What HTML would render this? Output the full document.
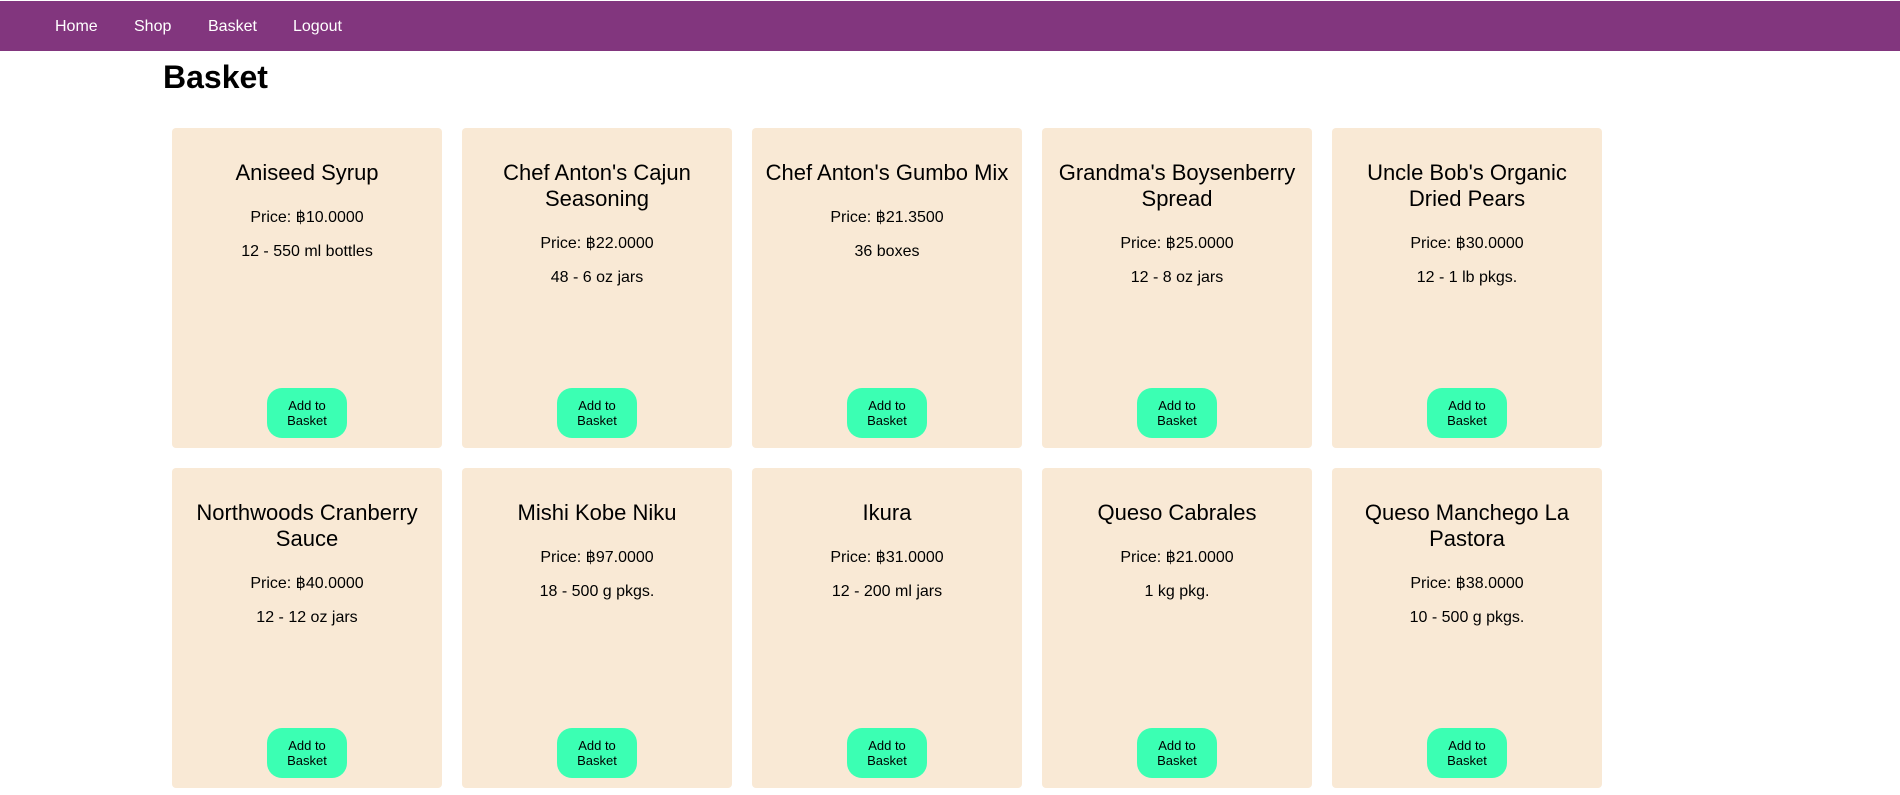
<!DOCTYPE html>
<html><head><meta charset="utf-8"><style>
*{box-sizing:border-box}
body{margin:0;width:1900px;height:795px;overflow:hidden;background:#fff;font-family:"Liberation Sans",Arial,sans-serif;color:#000}
.nav{position:absolute;top:1px;left:0;width:1900px;height:50px;background:#82367e}
.nav a{position:absolute;top:16px;color:#fff;font-size:16px;line-height:19px;text-decoration:none}
h1{position:absolute;left:163px;top:59px;margin:0;font-size:32px;line-height:37px;font-weight:bold}
.card{position:absolute;width:270px;height:320px;background:#f9e9d5;border-radius:4px;text-align:center;padding:32px 8px 0}
.card h3{margin:0;font-size:22px;line-height:26px;font-weight:normal}
.card .p{margin:22px 0 0;font-size:16px;line-height:19px}
.card .d{margin:15px 0 0;font-size:16px;line-height:19px}
.card button{position:absolute;left:95px;top:260px;width:80px;height:50px;border:0;border-radius:15px;background:#3bffb3;font-family:"Liberation Sans",Arial,sans-serif;font-size:13px;line-height:15px;color:#000;padding:0 10px}
</style></head><body>
<div class="nav"><a style="left:55px">Home</a><a style="left:134px">Shop</a><a style="left:208px">Basket</a><a style="left:293px">Logout</a></div>
<h1>Basket</h1>
<div class="card" style="left:172px;top:128px"><h3>Aniseed Syrup</h3><p class="p">Price: ฿10.0000</p><p class="d">12 - 550 ml bottles</p><button>Add to Basket</button></div>
<div class="card" style="left:462px;top:128px"><h3>Chef Anton's Cajun Seasoning</h3><p class="p">Price: ฿22.0000</p><p class="d">48 - 6 oz jars</p><button>Add to Basket</button></div>
<div class="card" style="left:752px;top:128px"><h3>Chef Anton's Gumbo Mix</h3><p class="p">Price: ฿21.3500</p><p class="d">36 boxes</p><button>Add to Basket</button></div>
<div class="card" style="left:1042px;top:128px"><h3>Grandma's Boysenberry Spread</h3><p class="p">Price: ฿25.0000</p><p class="d">12 - 8 oz jars</p><button>Add to Basket</button></div>
<div class="card" style="left:1332px;top:128px"><h3>Uncle Bob's Organic Dried Pears</h3><p class="p">Price: ฿30.0000</p><p class="d">12 - 1 lb pkgs.</p><button>Add to Basket</button></div>
<div class="card" style="left:172px;top:468px"><h3>Northwoods Cranberry Sauce</h3><p class="p">Price: ฿40.0000</p><p class="d">12 - 12 oz jars</p><button>Add to Basket</button></div>
<div class="card" style="left:462px;top:468px"><h3>Mishi Kobe Niku</h3><p class="p">Price: ฿97.0000</p><p class="d">18 - 500 g pkgs.</p><button>Add to Basket</button></div>
<div class="card" style="left:752px;top:468px"><h3>Ikura</h3><p class="p">Price: ฿31.0000</p><p class="d">12 - 200 ml jars</p><button>Add to Basket</button></div>
<div class="card" style="left:1042px;top:468px"><h3>Queso Cabrales</h3><p class="p">Price: ฿21.0000</p><p class="d">1 kg pkg.</p><button>Add to Basket</button></div>
<div class="card" style="left:1332px;top:468px"><h3>Queso Manchego La Pastora</h3><p class="p">Price: ฿38.0000</p><p class="d">10 - 500 g pkgs.</p><button>Add to Basket</button></div>
</body></html>
